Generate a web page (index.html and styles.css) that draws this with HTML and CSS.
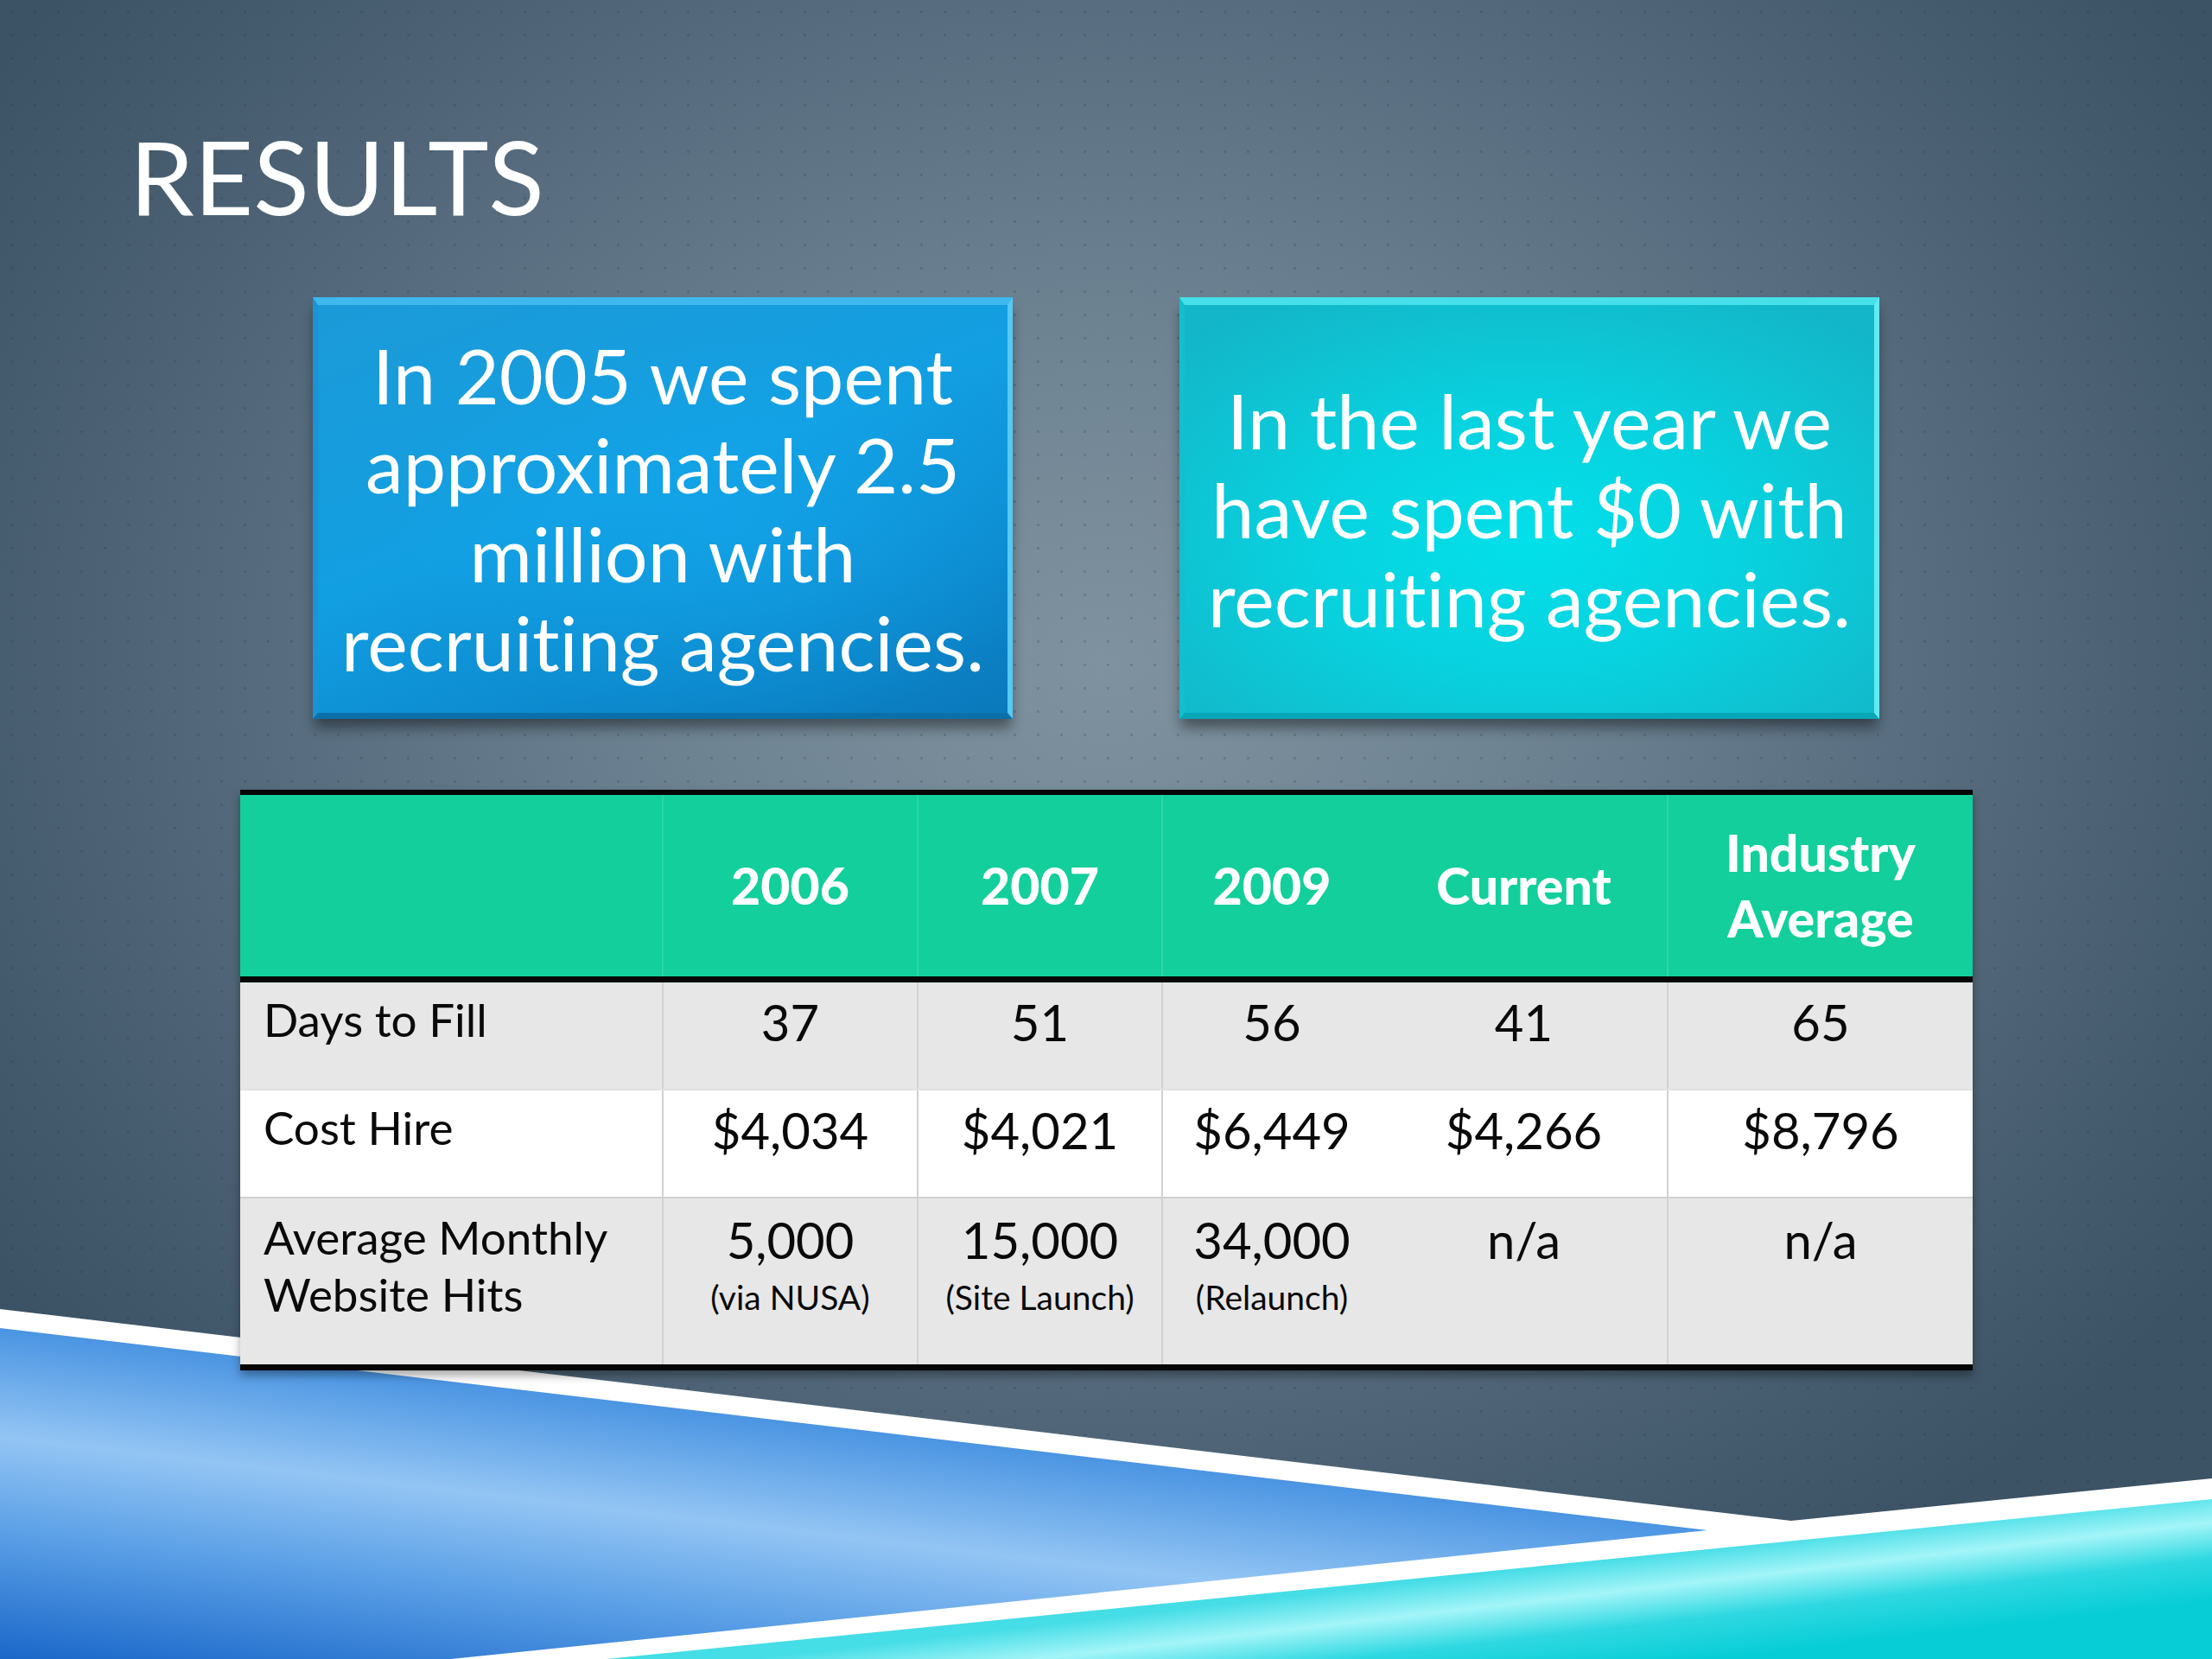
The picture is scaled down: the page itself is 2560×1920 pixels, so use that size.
FILE: index.html
```html
<!DOCTYPE html>
<html lang="en">
<head>
<meta charset="utf-8">
<title>Results</title>
<link rel="stylesheet" href="styles.css">
</head>
<body>
<div class="slide">
  <svg class="wedges" width="2560" height="1920" viewBox="0 0 2560 1920" aria-hidden="true">
    <defs>
      <linearGradient id="gBlue" gradientUnits="userSpaceOnUse" x1="500" y1="1595" x2="455" y2="1975">
        <stop offset="0" stop-color="#4a94e2"/>
        <stop offset="0.33" stop-color="#93c5f4"/>
        <stop offset="0.62" stop-color="#5a9fe6"/>
        <stop offset="1" stop-color="#1a67c9"/>
      </linearGradient>
      <linearGradient id="gCyan" gradientUnits="userSpaceOnUse" x1="1800" y1="1811" x2="1815" y2="1940">
        <stop offset="0" stop-color="#45dde6"/>
        <stop offset="0.3" stop-color="#a3f5f8"/>
        <stop offset="0.62" stop-color="#2fd8e1"/>
        <stop offset="1" stop-color="#07cdd6"/>
      </linearGradient>
    </defs>
    <polygon points="0,1515 2073,1760 2560,1711 2560,1920 0,1920" fill="#ffffff"/>
    <polygon points="0,1537 1976,1771 522,1920 0,1920" fill="url(#gBlue)"/>
    <polygon points="2560,1735 702,1920 2560,1920" fill="url(#gCyan)"/>
  </svg>

  <div class="content">
    <h1 class="title">RESULTS</h1>

    <div class="boxes">
      <div class="box box-blue">
        <p class="box-text">In 2005 we spent<br>approximately 2.5<br>million with<br>recruiting agencies.</p>
      </div>
      <div class="box box-cyan">
        <p class="box-text">In the last year we<br>have spent $0 with<br>recruiting agencies.</p>
      </div>
    </div>

    <div class="table">
      <div class="tr head">
        <div class="c first"></div>
        <div class="c">2006</div>
        <div class="c">2007</div>
        <div class="c">2009</div>
        <div class="c nb">Current</div>
        <div class="c">Industry<br>Average</div>
      </div>
      <div class="tr row row1">
        <div class="c first label">Days to Fill</div>
        <div class="c num">37</div>
        <div class="c num">51</div>
        <div class="c num">56</div>
        <div class="c num nb">41</div>
        <div class="c num">65</div>
      </div>
      <div class="tr row row2">
        <div class="c first label">Cost Hire</div>
        <div class="c num">$4,034</div>
        <div class="c num">$4,021</div>
        <div class="c num">$6,449</div>
        <div class="c num nb">$4,266</div>
        <div class="c num">$8,796</div>
      </div>
      <div class="tr row row3">
        <div class="c first label">Average Monthly<br>Website Hits</div>
        <div class="c num">5,000<span class="sub">(via NUSA)</span></div>
        <div class="c num">15,000<span class="sub">(Site Launch)</span></div>
        <div class="c num">34,000<span class="sub">(Relaunch)</span></div>
        <div class="c num nb">n/a</div>
        <div class="c num">n/a</div>
      </div>
    </div>
  </div>
</div>
</body>
</html>
```

FILE: styles.css
```css
html, body {
  margin: 0;
  padding: 0;
}

body {
  font-family: Lato, "Open Sans", "Liberation Sans", sans-serif;
  font-variant-ligatures: no-common-ligatures;
  font-feature-settings: "liga" 0, "clig" 0;
  background: #3d5467;
}

.slide {
  position: relative;
  width: 2560px;
  height: 1920px;
  overflow: hidden;
  background-color: #3f5668;
  background-image:
    radial-gradient(circle, rgba(30, 48, 62, 0.2) 0 1.3px, transparent 2px),
    radial-gradient(ellipse 1550px 1250px at 50% 40%, #7f929f 0%, #6f8493 30%, #576c7e 62%, #435a6c 88%, #3c5265 100%);
  background-size: 27px 27px, 100% 100%;
}

.wedges {
  position: absolute;
  left: 0;
  top: 0;
  z-index: 0;
}

.content {
  position: relative;
  z-index: 1;
  padding-top: 132px;
}

.title {
  margin: 0 0 0 150px;
  font-family: Lato, "Open Sans", sans-serif;
  font-weight: 400;
  font-size: 119px;
  line-height: 143px;
  color: #ffffff;
}

.boxes {
  display: flex;
  gap: 193px;
  margin: 69px 0 0 362px;
}

.box {
  box-sizing: border-box;
  width: 810px;
  height: 488px;
  display: flex;
  align-items: center;
  justify-content: center;
  border-style: solid;
  border-width: 9px 6px 7px 6px;
  box-shadow: 0 12px 14px -2px rgba(0, 0, 0, 0.42);
}

.box-blue {
  border-color: #3fb8ee #55c9f3 #0b70aa #1a94d4;
  background:
    radial-gradient(ellipse 70% 70% at 60% 55%, rgba(20, 170, 240, 0.55) 0%, rgba(20, 170, 240, 0) 70%),
    linear-gradient(160deg, #1c9ad8 0%, #129fe2 45%, #0c86cb 80%, #0a79bb 100%);
}

.box-cyan {
  border-color: #45e0ea #62eaf2 #08a7b6 #12bfce;
  background:
    radial-gradient(ellipse 70% 70% at 50% 58%, #02e0ea 0%, #08d2df 45%, #10c0d0 80%, #12b6c8 100%);
}

.box-text {
  margin: 0;
  text-align: center;
  color: #ffffff;
  font-size: 88px;
  line-height: 103px;
  font-weight: 400;
}

.table {
  width: 2005px;
  margin: 82px 0 0 278px;
  border-top: 6px solid #060606;
  border-bottom: 7px solid #060606;
  box-shadow: 0 6px 10px rgba(0, 0, 0, 0.35);
}

.tr {
  display: grid;
  grid-template-columns: 488px 295px 283px 254px 331px 354px;
}

.head {
  height: 210px;
  background: #12cf9b;
  border-bottom: 7px solid #060606;
}

.head .c {
  display: flex;
  align-items: center;
  justify-content: center;
  text-align: center;
  color: #ffffff;
  font-weight: 900;
  font-size: 59px;
  line-height: 76px;
  border-left: 2px solid rgba(255, 255, 255, 0.12);
}

.c {
  box-sizing: border-box;
  color: #0a0a0a;
}

.head .c.first,
.head .c.nb {
  border-left: none;
}

.row .c {
  border-left: 2px solid #d2d2d2;
  padding-top: 10px;
}

.row .c.first,
.row .c.nb {
  border-left: none;
}

.row1 {
  height: 123px;
  background: #e7e7e7;
}

.row2 {
  height: 123px;
  background: #ffffff;
  border-top: 2px solid #e2e2e2;
}

.row3 {
  height: 192px;
  background: #e7e7e7;
  border-top: 2px solid #d0d0d0;
}

.row3 .c {
  padding-top: 12px;
}

.label {
  padding-left: 27px;
  font-size: 53px;
  line-height: 66px;
}

.num {
  text-align: center;
  font-size: 58px;
  line-height: 72px;
}

.sub {
  display: block;
  margin-top: 8px;
  font-size: 39px;
  line-height: 44px;
}
```
